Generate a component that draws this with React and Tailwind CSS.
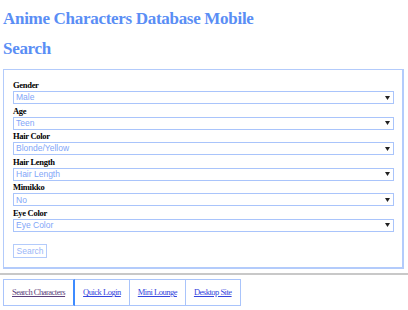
const fields = [
  { label: 'Gender', value: 'Male' },
  { label: 'Age', value: 'Teen' },
  { label: 'Hair Color', value: 'Blonde/Yellow' },
  { label: 'Hair Length', value: 'Hair Length' },
  { label: 'Mimikko', value: 'No' },
  { label: 'Eye Color', value: 'Eye Color' },
]

const links = [
  { text: 'Search Characters', cls: 'text-[#5a3e7a]' },
  { text: 'Quick Login', cls: 'text-[#3344dd]' },
  { text: 'Mini Lounge', cls: 'text-[#3344dd]' },
  { text: 'Desktop Site', cls: 'text-[#3344dd]' },
]

function Select({ value }) {
  return (
    <div className="h-[13px] border border-[#a9c4fb] flex items-center justify-between pl-[2px] pr-[3px] font-['Liberation_Sans',Arial,sans-serif] text-[8.5px] leading-none text-[#7fa6f8]">
      <span>{value}</span>
      <svg width="5" height="4" viewBox="0 0 5 4"><path d="M0 0h5L2.5 4z" fill="#222" /></svg>
    </div>
  )
}

export default function App() {
  return (
    <div className="w-[408px] h-[310px] bg-white overflow-hidden font-['Liberation_Serif','Times_New_Roman',serif]">
      <h1 className="pl-[3px] pt-[9px] h-[39px] text-[17px] tracking-[-0.3px] leading-[20px] font-bold text-[#5a8ef5]">
        Anime Characters Database Mobile
      </h1>
      <h2 className="pl-[3px] h-[30px] text-[17px] tracking-[-0.3px] leading-[20px] font-bold text-[#5a8ef5]">Search</h2>
      <div className="ml-[3px] w-[401px] h-[200px] border border-[#b3cbfb] border-b-2 border-r-2 pt-[9px] pl-[9px] pr-[8px]">
        {fields.map((f) => (
          <div key={f.label} className="mb-[0.6px]">
            <div className="h-[12px] text-[8.5px] tracking-[-0.3px] leading-[12px] font-bold text-black">{f.label}</div>
            <Select value={f.value} />
          </div>
        ))}
        <div className="mt-[12px] w-[34px] h-[14px] border border-[#b3cbfb] flex items-center justify-center font-['Liberation_Sans',Arial,sans-serif] text-[8.5px] leading-none text-[#9ab6f7]">
          Search
        </div>
      </div>
      <div className="mt-[4px] h-[2px] bg-[#c8c8c8]" />
      <div className="mt-[4px] ml-[3px] flex h-[27px]">
        {links.map((l, i) => (
          <div
            key={l.text}
            className={
              'flex items-center px-[8px] border border-[#a9c4fb] ' +
              (i > 0 ? 'border-l-0 ' : '') +
              (i === 0 ? 'border-r-2 border-r-[#3d8bff] ' : '')
            }
          >
            <a href="#" className={'underline text-[8.5px] tracking-[-0.5px] leading-none ' + l.cls}>{l.text}</a>
          </div>
        ))}
      </div>
    </div>
  )
}
